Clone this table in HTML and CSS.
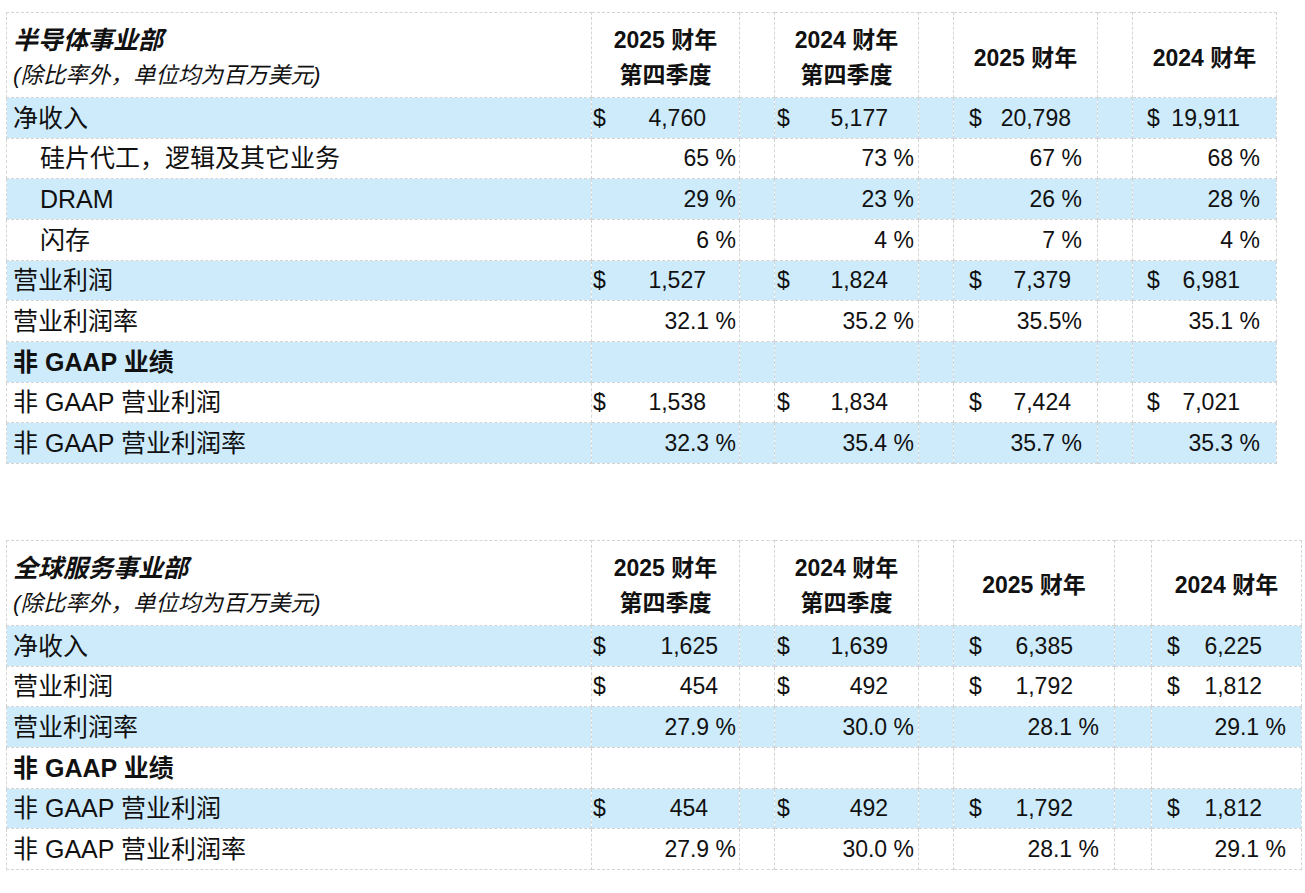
FILE: index.html
```html
<!DOCTYPE html>
<html lang="zh-CN">
<head>
<meta charset="utf-8">
<title>事业部业绩</title>
<link rel="stylesheet" href="styles.css">
</head>
<body>
<table class="fin t1">
  <colgroup>
    <col class="w-label"><col class="w-c1"><col class="w-sp"><col class="w-c2"><col class="w-sp"><col class="w-c3"><col class="w-sp"><col class="w-c4">
  </colgroup>
  <thead>
    <tr class="head">
      <th class="label"><div class="ln title">半导体事业部</div><div class="ln sub">(除比率外，单位均为百万美元)</div></th>
      <th><div class="ln">2025 财年</div><div class="ln">第四季度</div></th><th class="sp"></th>
      <th><div class="ln">2024 财年</div><div class="ln">第四季度</div></th><th class="sp"></th>
      <th><div class="ln">2025 财年</div></th><th class="sp"></th>
      <th><div class="ln">2024 财年</div></th>
    </tr>
  </thead>
  <tbody>
    <tr class="blue"><td class="label">净收入</td>
      <td class="num c1"><span>$</span><span>4,760</span></td><td></td>
      <td class="num c2"><span>$</span><span>5,177</span></td><td></td>
      <td class="num c3"><span>$</span><span>20,798</span></td><td></td>
      <td class="num c4"><span>$</span><span>19,911</span></td></tr>
    <tr><td class="label ind">硅片代工，逻辑及其它业务</td>
      <td class="pct c1">65 %</td><td></td><td class="pct c2">73 %</td><td></td><td class="pct c3">67 %</td><td></td><td class="pct c4">68 %</td></tr>
    <tr class="blue"><td class="label ind">DRAM</td>
      <td class="pct c1">29 %</td><td></td><td class="pct c2">23 %</td><td></td><td class="pct c3">26 %</td><td></td><td class="pct c4">28 %</td></tr>
    <tr><td class="label ind">闪存</td>
      <td class="pct c1">6 %</td><td></td><td class="pct c2">4 %</td><td></td><td class="pct c3">7 %</td><td></td><td class="pct c4">4 %</td></tr>
    <tr class="blue"><td class="label">营业利润</td>
      <td class="num c1"><span>$</span><span>1,527</span></td><td></td>
      <td class="num c2"><span>$</span><span>1,824</span></td><td></td>
      <td class="num c3"><span>$</span><span>7,379</span></td><td></td>
      <td class="num c4"><span>$</span><span>6,981</span></td></tr>
    <tr><td class="label">营业利润率</td>
      <td class="pct c1">32.1 %</td><td></td><td class="pct c2">35.2 %</td><td></td><td class="pct c3">35.5%</td><td></td><td class="pct c4">35.1 %</td></tr>
    <tr class="blue"><td class="label bold">非 GAAP 业绩</td>
      <td></td><td></td><td></td><td></td><td></td><td></td><td></td></tr>
    <tr><td class="label">非 GAAP 营业利润</td>
      <td class="num c1"><span>$</span><span>1,538</span></td><td></td>
      <td class="num c2"><span>$</span><span>1,834</span></td><td></td>
      <td class="num c3"><span>$</span><span>7,424</span></td><td></td>
      <td class="num c4"><span>$</span><span>7,021</span></td></tr>
    <tr class="blue"><td class="label">非 GAAP 营业利润率</td>
      <td class="pct c1">32.3 %</td><td></td><td class="pct c2">35.4 %</td><td></td><td class="pct c3">35.7 %</td><td></td><td class="pct c4">35.3 %</td></tr>
  </tbody>
</table>

<table class="fin t2">
  <colgroup>
    <col class="w-label"><col class="w-c1"><col class="w-sp"><col class="w-c2"><col class="w-sp"><col class="w-c3b"><col class="w-spb"><col class="w-c4b">
  </colgroup>
  <thead>
    <tr class="head">
      <th class="label"><div class="ln title">全球服务事业部</div><div class="ln sub">(除比率外，单位均为百万美元)</div></th>
      <th><div class="ln">2025 财年</div><div class="ln">第四季度</div></th><th class="sp"></th>
      <th><div class="ln">2024 财年</div><div class="ln">第四季度</div></th><th class="sp"></th>
      <th><div class="ln">2025 财年</div></th><th class="sp"></th>
      <th><div class="ln">2024 财年</div></th>
    </tr>
  </thead>
  <tbody>
    <tr class="blue"><td class="label">净收入</td>
      <td class="num c1"><span>$</span><span>1,625</span></td><td></td>
      <td class="num c2"><span>$</span><span>1,639</span></td><td></td>
      <td class="num c3"><span>$</span><span>6,385</span></td><td></td>
      <td class="num c4"><span>$</span><span>6,225</span></td></tr>
    <tr><td class="label">营业利润</td>
      <td class="num c1"><span>$</span><span>454</span></td><td></td>
      <td class="num c2"><span>$</span><span>492</span></td><td></td>
      <td class="num c3"><span>$</span><span>1,792</span></td><td></td>
      <td class="num c4"><span>$</span><span>1,812</span></td></tr>
    <tr class="blue"><td class="label">营业利润率</td>
      <td class="pct c1">27.9 %</td><td></td><td class="pct c2">30.0 %</td><td></td><td class="pct c3">28.1 %</td><td></td><td class="pct c4">29.1 %</td></tr>
    <tr><td class="label bold">非 GAAP 业绩</td>
      <td></td><td></td><td></td><td></td><td></td><td></td><td></td></tr>
    <tr class="blue"><td class="label">非 GAAP 营业利润</td>
      <td class="num c1 n2"><span>$</span><span>454</span></td><td></td>
      <td class="num c2"><span>$</span><span>492</span></td><td></td>
      <td class="num c3"><span>$</span><span>1,792</span></td><td></td>
      <td class="num c4"><span>$</span><span>1,812</span></td></tr>
    <tr><td class="label">非 GAAP 营业利润率</td>
      <td class="pct c1">27.9 %</td><td></td><td class="pct c2">30.0 %</td><td></td><td class="pct c3">28.1 %</td><td></td><td class="pct c4">29.1 %</td></tr>
  </tbody>
</table>
</body>
</html>
```
FILE: styles.css
```css
html, body {
  margin: 0;
  padding: 0;
  background: #ffffff;
}
body {
  padding: 12px 0 0 6px;
  font-family: "Liberation Sans", "Noto Sans CJK SC", sans-serif;
  color: #111111;
}
.fin {
  border-collapse: collapse;
  table-layout: fixed;
}
.t1 { width: 1270px; }
.t2 { width: 1295px; margin-top: 76px; }

.w-label { width: 585px; }
.w-c1 { width: 148px; }
.w-sp { width: 35px; }
.w-c2 { width: 144px; }
.w-c3 { width: 144px; }
.w-c4 { width: 144px; }
.w-c3b { width: 161px; }
.w-spb { width: 37px; }
.w-c4b { width: 150px; }

.fin th, .fin td {
  border: 1px dashed #d4d4d4;
  padding: 0;
  white-space: nowrap;
  overflow: hidden;
}
.fin td {
  height: 39.67px;
  font-size: 23px;
  line-height: 28px;
  vertical-align: middle;
}
.head th {
  height: 78px;
  padding-top: 6px;
  font-size: 23px;
  font-weight: 700;
  text-align: center;
  vertical-align: middle;
}
.ln {
  height: 35px;
  line-height: 35px;
  overflow: hidden;
}
.head th.label {
  text-align: left;
  padding-left: 6px;
  font-weight: normal;
}
.title {
  font-size: 25px;
  font-weight: 700;
  font-style: italic;
}
.sub {
  font-size: 22.5px;
  font-style: italic;
}
.blue td {
  background: #cdebfb;
}
td.label {
  font-size: 25px;
  padding-left: 6px;
}
td.label.ind { padding-left: 33px; }
td.label.bold { font-weight: 700; }

td.num { text-align: right; }
td.num span:first-child { float: left; }
td.pct { text-align: right; }

.t1 td.num.c1 { padding: 0 33px 0 1px; }
.t1 td.num.c2 { padding: 0 30px 0 2px; }
.t1 td.num.c3 { padding: 0 26px 0 15px; }
.t1 td.num.c4 { padding: 0 36px 0 14px; }
.t1 td.pct.c1 { padding-right: 3px; }
.t1 td.pct.c2 { padding-right: 4px; }
.t1 td.pct.c3 { padding-right: 15px; }
.t1 td.pct.c4 { padding-right: 16px; }

.t2 td.num.c1 { padding: 0 21px 0 1px; }
.t2 td.num.c1.n2 { padding-right: 31px; }
.t2 td.num.c2 { padding: 0 30px 0 2px; }
.t2 td.num.c3 { padding: 0 41px 0 15px; }
.t2 td.num.c4 { padding: 0 39px 0 15px; }
.t2 td.pct.c1 { padding-right: 3px; }
.t2 td.pct.c2 { padding-right: 4px; }
.t2 td.pct.c3 { padding-right: 15px; }
.t2 td.pct.c4 { padding-right: 15px; }
```
